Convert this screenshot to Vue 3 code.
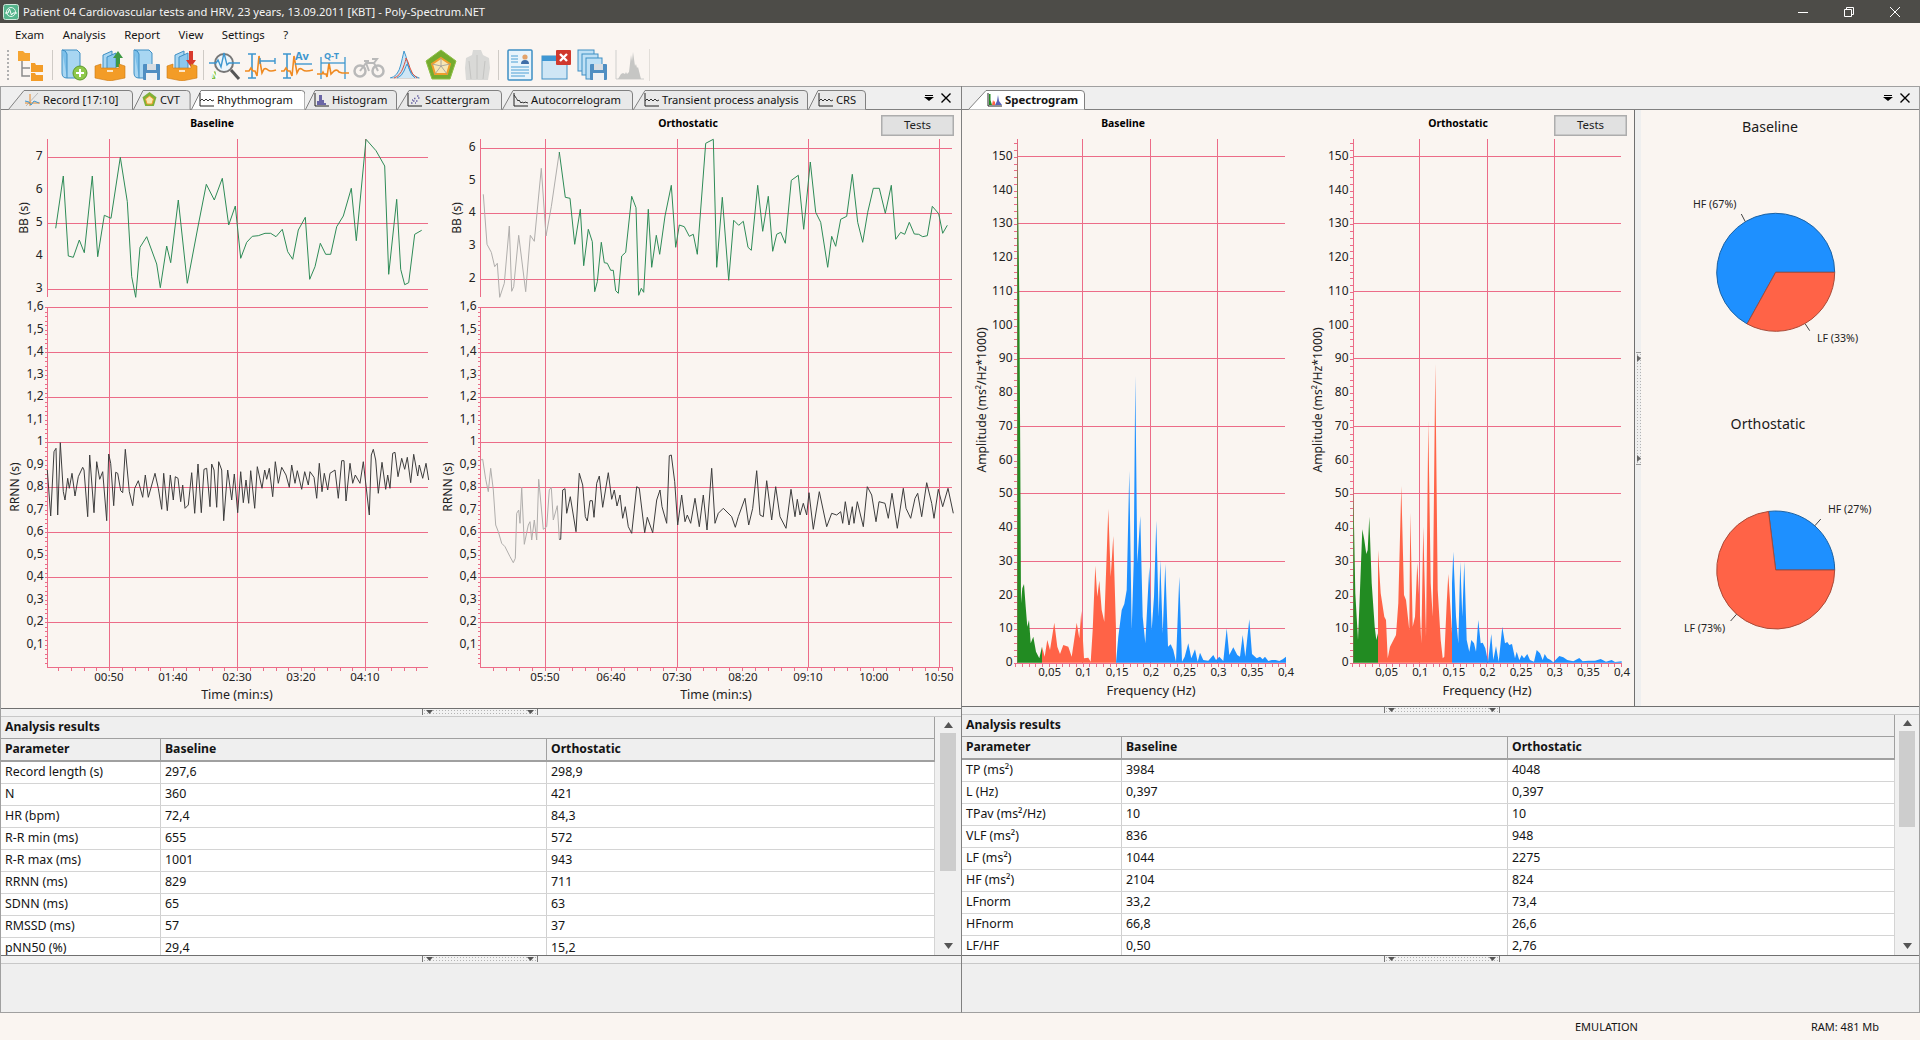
<script setup>
const Y0 = 110
const pairs = (arr, ox, oy, k = 3) => {
  const out = []
  for (let i = 0; i < arr.length; i += 2) out.push(`${(ox + arr[i] / k).toFixed(1)},${(oy + arr[i + 1] / k).toFixed(1)}`)
  return out.join(' ')
}
const closed = (arr, ox, oy, base) => {
  const a = [arr[0], base, ...arr, arr[arr.length - 2], base]
  return pairs(a, ox, oy)
}

// ---------- traces, read from the reference ----------
const bbA = [167,355,190,198,205,438,220,442,238,390,253,428,277,198,293,440,313,316,333,325,361,142,382,275,395,500,407,562,420,412,440,380,470,462,481,533,500,408,512,458,535,270,562,520,595,345,619,223,643,270,667,205,686,345,706,288,722,445,740,397,757,379,775,377,795,370,812,370,828,380,847,358,863,425,878,448,895,360,916,322,929,508,945,470,961,400,977,433,992,433,1010,350,1030,318,1054,235,1069,392,1098,88,1128,122,1154,168,1166,493,1190,268,1202,478,1214,524,1226,518,1244,373,1265,361]
const bbBg = [100,253,111,403,124,427,134,470,142,460,149,562,163,520,178,348,185,544,191,530,206,376,227,545,241,376,253,394,274,175,288,378,304,290,328,126]
const bbB = [328,126,346,262,360,265,374,403,391,298,401,467,415,358,427,395,434,545,442,515,454,397,463,458,472,460,482,481,490,481,497,542,505,550,515,438,527,427,545,259,558,293,566,556,574,535,581,547,595,298,605,472,619,376,629,433,645,318,664,226,677,412,688,345,703,350,718,379,730,373,742,433,767,100,790,88,800,472,817,262,836,511,851,331,866,346,880,334,894,412,904,421,923,226,938,364,955,259,968,424,980,373,992,367,1006,400,1024,211,1045,196,1061,358,1081,156,1097,307,1112,337,1133,472,1145,379,1157,409,1172,328,1190,319,1207,193,1223,337,1238,397,1253,307,1270,235,1288,235,1306,310,1324,226,1337,388,1352,367,1364,373,1378,337,1393,372,1406,373,1418,380,1432,377,1447,289,1466,311,1478,370,1492,346]
const rrA = [142,150,152,288,162,95,168,85,173,285,181,68,190,215,195,240,203,175,208,205,216,160,225,228,235,170,248,142,252,150,263,290,269,105,282,278,290,125,299,178,308,155,320,302,326,102,332,130,341,257,347,157,353,160,362,212,368,218,376,88,388,215,398,257,404,205,415,182,428,232,436,165,445,232,465,160,475,205,485,268,491,160,502,272,511,165,520,240,526,170,534,175,542,245,548,195,555,265,565,255,575,158,584,280,594,132,604,278,612,148,620,145,630,260,635,132,642,150,650,262,656,125,665,150,671,302,683,150,695,240,703,162,713,278,722,155,730,248,738,180,746,250,752,152,764,265,772,140,786,205,794,150,800,178,808,145,818,230,826,125,835,190,845,142,858,165,868,202,875,135,885,190,892,152,905,208,914,155,925,195,930,155,942,172,950,235,958,130,966,215,973,160,983,210,990,160,1005,150,1015,235,1025,122,1032,122,1038,243,1050,130,1058,190,1066,165,1080,190,1090,125,1108,285,1114,105,1120,88,1127,120,1135,220,1146,127,1157,208,1163,165,1170,205,1178,100,1185,97,1194,170,1205,115,1214,148,1222,112,1232,188,1241,103,1253,168,1258,135,1268,175,1278,130,1286,180]
const rrBg = [92,150,98,148,107,208,115,245,122,175,130,240,137,345,145,365,155,400,165,410,180,440,190,458,196,445,200,310,206,300,210,340,215,232,223,403,235,345,240,335,245,390,253,330,260,390,266,208,280,358,290,350,298,240,304,232,310,330,322,287,328,388]
const rrB = [328,388,332,388,338,240,345,236,350,310,361,260,378,365,388,190,398,225,406,320,412,333,420,272,427,272,432,322,440,220,448,198,458,292,475,188,485,268,493,240,501,288,510,255,518,325,526,290,535,350,545,370,560,230,568,235,584,368,592,322,608,368,620,270,630,240,636,290,650,340,658,137,664,135,674,215,683,345,695,255,705,335,712,315,722,340,735,265,748,350,760,255,771,360,785,175,795,340,805,310,820,295,845,320,856,352,865,320,885,265,896,345,908,295,920,182,930,315,940,320,950,212,965,330,977,230,990,320,1008,355,1023,238,1035,320,1042,268,1050,315,1060,280,1070,315,1077,248,1090,358,1108,245,1130,350,1145,310,1160,315,1172,305,1178,340,1186,275,1197,345,1207,290,1212,340,1222,275,1240,350,1252,230,1265,255,1278,335,1287,275,1305,280,1315,325,1326,250,1342,355,1360,235,1368,295,1382,325,1395,265,1403,250,1415,320,1430,218,1445,280,1452,325,1465,238,1478,290,1494,235,1510,310]

const sA = {
  g: [172,-870,178,-400,181,90,183,520,187,475,192,462,197,530,202,590,207,570,212,640,220,620,228,665,238,685,246,650],
  r: [246,650,254,680,262,630,270,660,283,578,292,650,300,672,310,645,325,650,335,680,350,578,358,625,364,543,372,685,385,683,392,695,398,600,406,407,412,500,418,452,425,540,433,575,445,237,452,440,460,318,468,600],
  b: [468,698,475,620,485,540,493,522,500,480,508,123,515,600,521,400,526,-162,532,400,541,258,548,560,556,640,568,410,575,600,582,500,589,272,596,560,601,390,608,610,616,402,624,650,632,643,640,660,648,695,658,440,666,695,674,680,685,640,694,685,705,658,713,695,720,668,730,690,745,692,760,675,768,690,778,680,790,693,800,595,808,675,820,652,832,675,840,680,848,615,856,680,868,568,876,672,890,685,900,680,908,688,915,680,925,693,935,690,947,690,958,693,968,688,978,680]
}
const sB = {
  g: [190,410,196,730,204,870,210,720,217,538,223,570,229,612,233,600,238,500,245,700,254,830,259,870,264,850],
  r: [264,600,272,730,283,800,288,810,293,925,300,890,318,855,325,760,334,408,342,735,348,750,358,840,361,488,368,830,375,800,382,638,388,750,394,880,400,530,408,860,415,212,422,700,428,800,436,42,443,720,452,870,458,925,463,920,470,760,475,672,486,850],
  b: [486,700,490,605,498,800,505,880,511,635,517,800,523,635,530,870,538,905,544,870,552,880,558,905,565,810,572,880,578,878,586,895,594,935,604,852,610,930,618,888,626,935,637,830,645,880,652,876,658,885,666,882,675,925,680,905,688,930,695,915,702,925,712,912,720,930,732,935,740,900,750,910,758,930,764,912,772,925,782,930,790,937,808,918,820,922,832,930,850,934,868,924,878,934,895,932,915,932,932,927,948,935,965,930,975,936,995,934]
}

// ---------- chart models ----------
const rhythm = (o) => {
  let grid = ''
  let ticks = ''
  const labels = []
  const ax = o.ax
  ticks += `M${ax} 139V297M${ax} 307V667H${o.right}`
  o.bb.forEach(([y, t], i) => {
    if (t) labels.push({ x: ax - 5, y: y - 2, t, a: 'end' })
    if (i % 2 === 0) grid += `M${ax} ${y}H${o.right}`
  })
  for (let v = 1; v <= 16; v++) {
    const y = 667 - v * 22.5
    const s = v === 10 ? '1' : `${Math.floor(v / 10)},${v % 10}`
    labels.push({ x: ax - 4, y: y - 1.2, t: s, a: 'end' })
    if (v % 2 === 0) grid += `M${ax} ${Math.round(y) + 0.5}H${o.right}`
  }
  for (let y = 307; y < 667; y += 4.5) ticks += `M${ax - 3} ${Math.round(y) + 0.5}H${ax}`
  o.vgrid.forEach((x) => { grid += `M${x} 139V667` })
  for (let x = o.tick0; x <= o.right; x += o.step) ticks += `M${Math.round(x) + 0.5} 667V671`
  o.xl.forEach(([x, t]) => labels.push({ x, y: 676, t, a: 'middle', tick: true }))
  labels.push({ x: o.tx, y: 694.5, t: 'Time (min:s)', a: 'middle', big: true })
  labels.push({ x: o.ylx1, y: 218, t: 'BB (s)', a: 'middle', rot: true })
  labels.push({ x: o.ylx2, y: 487, t: 'RRNN (s)', a: 'middle', rot: true })
  return {
    key: o.title, x: o.x, w: o.w, title: o.title, titleX: o.titleX, grid, ticks, labels, fills: [],
    lines: o.lines
  }
}
const spectro = (o) => {
  let grid = ''
  let ticks = `M${o.ax} 139V663.5H${o.right}`
  const labels = []
  for (let v = 0; v <= 150; v += 10) {
    const y = 663 - v * 3.375
    labels.push({ x: o.ax - 5, y: y - 1.5, t: String(v), a: 'end' })
    if (v % 20 === 10) grid += `M${o.ax} ${Math.round(y) - 0.5}H${o.right}`
  }
  for (let y = 663; y > 140; y -= 6.75) ticks += `M${o.ax - 4} ${Math.round(y) + 0.5}H${o.ax}`
  o.vgrid.forEach((x) => { grid += `M${x} 139V663` })
  for (let x = o.x0; x <= o.right; x += o.span / 40) ticks += `M${Math.round(x) + 0.5} 663V667`
  const tl = ['0,05', '0,1', '0,15', '0,2', '0,25', '0,3', '0,35', '0,4']
  tl.forEach((t, i) => labels.push({ x: o.x0 + 1 + (i + 1) * o.span / 8, y: 671, t, a: 'middle', tick: true }))
  labels.push({ x: o.tx, y: 689.5, t: 'Frequency (Hz)', a: 'middle', huge: true })
  labels.push({ x: o.ylx, y: 400, t: 'Amplitude (ms²/Hz*1000)', a: 'middle', rot: true, amp: true })
  return {
    key: o.title, x: o.x, w: o.w, title: o.title, titleX: o.titleX, grid, ticks, labels, lines: [],
    fills: [
      { c: '#228b22', p: closed(o.data.g, o.ox, o.oy, o.base) },
      { c: '#ff6347', p: closed(o.data.r, o.ox, o.oy, o.base) },
      { c: '#1e90ff', p: closed(o.data.b, o.ox, o.oy, o.base) }
    ]
  }
}
const leftCharts = [
  rhythm({
    title: 'Baseline', titleX: 212, x: 1, w: 439, ax: 47.5, right: 428, vgrid: [109.5, 237.5, 365.5],
    bb: [[157.5, '7'], [190, '6'], [223.5, '5'], [256, '4'], [289.5, '3']],
    tick0: 58, step: 12.8, tx: 237, ylx1: 23, ylx2: 14,
    xl: [[109, '00:50'], [173, '01:40'], [237, '02:30'], [301, '03:20'], [365, '04:10']],
    lines: [
      { c: '#2e8b57', p: pairs(bbA, 0, 110) },
      { c: '#3d3d3d', p: pairs(rrA, 0, 420) }
    ]
  }),
  rhythm({
    title: 'Orthostatic', titleX: 688, x: 440, w: 520, ax: 480.5, right: 952, vgrid: [545.5, 677.5, 808.5, 939.5],
    bb: [[148.5, '6'], [181, '5'], [213.5, '4'], [246.5, '3'], [279.5, '2']],
    tick0: 493, step: 13.1, tx: 716, ylx1: 456, ylx2: 447,
    xl: [[545, '05:50'], [611, '06:40'], [677, '07:30'], [743, '08:20'], [808, '09:10'], [874, '10:00'], [939, '10:50']],
    lines: [
      { c: '#b0aeac', p: pairs(bbBg, 450, 110) },
      { c: '#2e8b57', p: pairs(bbB, 450, 110) },
      { c: '#b0aeac', p: pairs(rrBg, 450, 410) },
      { c: '#3d3d3d', p: pairs(rrB, 450, 410) }
    ]
  })
]
const rightCharts = [
  spectro({
    title: 'Baseline', titleX: 1123, x: 962, w: 336, ax: 1017.5, right: 1285, x0: 1015, span: 270,
    vgrid: [1082.5, 1150.5, 1217.5], tx: 1151, ylx: 981, data: sA, ox: 960, oy: 430, base: 698
  }),
  spectro({
    title: 'Orthostatic', titleX: 1458, x: 1298, w: 336, ax: 1353.5, right: 1621, x0: 1352, span: 269,
    vgrid: [1419.5, 1487.5, 1554.5], tx: 1487, ylx: 1317, data: sB, ox: 1290, oy: 350, base: 938
  })
]

const pieSlice = (cx, cy, r, a0, a1) => {
  const p = (a) => `${(cx + r * Math.cos(a * Math.PI / 180)).toFixed(2)} ${(cy + r * Math.sin(a * Math.PI / 180)).toFixed(2)}`
  return `M${cx} ${cy}L${p(a0)}A${r} ${r} 0 ${a1 - a0 > 180 ? 1 : 0} 1 ${p(a1)}Z`
}
const pies = [
  { key: 'a', title: 'Baseline', tx: 1770, ty: 126, red: pieSlice(1775.7, 272.3, 59, 0, 119), blue: pieSlice(1775.7, 272.3, 59, 119, 360),
    lines: 'M1741.3 214L1745.3 221.7M1805.3 324L1809.7 330.7',
    labels: [{ x: 1693, y: 204, t: 'HF (67%)' }, { x: 1817, y: 338, t: 'LF (33%)' }] },
  { key: 'b', title: 'Orthostatic', tx: 1768, ty: 423, red: pieSlice(1775.7, 570, 59, 0, 263), blue: pieSlice(1775.7, 570, 59, 263, 360),
    lines: 'M1814.8 525.8L1820.8 519M1736.6 614.2L1730.6 621',
    labels: [{ x: 1828, y: 509, t: 'HF (27%)' }, { x: 1684, y: 628, t: 'LF (73%)' }] }
]

// ---------- chrome ----------
const menus = ['Exam', 'Analysis', 'Report', 'View', 'Settings', '?']
const leftTabs = [
  { t: 'Record [17:10]', w: 125, pad: 11, s: 16, i: 'rec' },
  { t: 'CVT', w: 57.6, pad: 9, s: 10, i: 'cvt' },
  { t: 'Rhythmogram', w: 114.4, pad: 8.5, s: 10, i: 'line', on: true },
  { t: 'Histogram', w: 92, pad: 9, s: 10, i: 'hist' },
  { t: 'Scattergram', w: 105, pad: 8, s: 12, i: 'scat' },
  { t: 'Autocorrelogram', w: 131, pad: 10, s: 11, i: 'auto' },
  { t: 'Transient process analysis', w: 175, pad: 9, s: 12, i: 'line' },
  { t: 'CRS', w: 58, pad: 10, s: 10, i: 'line' }
]
const rightTabs = [{ t: 'Spectrogram', w: 117, pad: 11, s: 18, i: 'spec', on: true, bold: true }]
const tabPath = (t) => `M0.5 19.5L${t.s} 0.5H${t.w - 4}Q${t.w - 0.5} 0.5 ${t.w - 0.5} 4V19.5`

const leftRows = [
  ['Record length (s)', '297,6', '298,9'], ['N', '360', '421'], ['HR (bpm)', '72,4', '84,3'],
  ['R-R min (ms)', '655', '572'], ['R-R max (ms)', '1001', '943'], ['RRNN (ms)', '829', '711'],
  ['SDNN (ms)', '65', '63'], ['RMSSD (ms)', '57', '37'], ['pNN50 (%)', '29,4', '15,2']
]
const rightRows = [
  ['TP (ms²)', '3984', '4048'], ['L (Hz)', '0,397', '0,397'], ['TPav (ms²/Hz)', '10', '10'],
  ['VLF (ms²)', '836', '948'], ['LF (ms²)', '1044', '2275'], ['HF (ms²)', '2104', '824'],
  ['LFnorm', '33,2', '73,4'], ['HFnorm', '66,8', '26,6'], ['LF/HF', '0,50', '2,76']
]
const panels = [
  { key: 'l', cls: 'left', tabs: leftTabs, charts: leftCharts, rows: leftRows, plotH: 598, pies: false, thumb: 138 },
  { key: 'r', cls: 'right', tabs: rightTabs, charts: rightCharts, rows: rightRows, plotH: 596, pies: true, thumb: 96 }
]
</script>

<template>
  <div class="window">
    <header class="titlebar">
      <svg class="appicon" width="16" height="16" viewBox="0 0 16 16">
        <rect x="0.5" y="0.5" width="15" height="15" rx="2" fill="#55b48c" stroke="#cfe9dc" />
        <circle cx="8" cy="8" r="4.5" fill="none" stroke="#e8f6ef" />
        <path d="M2 9h3l1.5-4 2 6 1.5-2h4" fill="none" stroke="#fff" />
      </svg>
      <span class="wintitle">Patient 04 Cardiovascular tests and HRV, 23 years, 13.09.2011 [KBT] - Poly-Spectrum.NET</span>
      <div class="winbtns">
        <span class="winbtn"><svg width="12" height="12" viewBox="0 0 12 12"><path d="M1 6.5h10" stroke="#fff" /></svg></span>
        <span class="winbtn"><svg width="12" height="12" viewBox="0 0 12 12"><path d="M1.5 3.5h7v7h-7zM3.5 3.5v-2h7v7h-2" fill="none" stroke="#fff" /></svg></span>
        <span class="winbtn"><svg width="12" height="12" viewBox="0 0 12 12"><path d="M1 1l10 10M11 1L1 11" stroke="#fff" /></svg></span>
      </div>
    </header>

    <nav class="menubar">
      <span v-for="m in menus" :key="m" class="menu">{{ m }}</span>
    </nav>

    <div class="toolbar">
      <span class="grip"></span>
      <svg class="tb" viewBox="0 0 32 32">
        <path d="M7 10V27H15M7 19H15" fill="none" stroke="#8a8a8a" stroke-width="1.5" />
        <path d="M3 2h5l2 2h5v8H3z" fill="#f6a531" />
        <path d="M16 14h4l1 2h7v7H16z" fill="#f39c27" />
        <path d="M16 24h4l1 2h7v6H16z" fill="#f39c27" />
      </svg>
      <span class="sep"></span>
      <svg class="tb" viewBox="0 0 32 32">
        <path d="M4 1h15l3 3v25H9q-5 0-5-5z" fill="#a8d6f2" stroke="#3e8fc4" />
        <path d="M4 1q4 0 5 4v24" fill="#7cc0ea" stroke="#3e8fc4" />
        <circle cx="22" cy="24" r="7" fill="#8fc84a" stroke="#5d9a2a" />
        <path d="M22 20v8M18 24h8" stroke="#fff" stroke-width="2" />
      </svg>
      <svg class="tb" viewBox="0 0 32 32">
        <path d="M9 6l9-4v20H9z" fill="#a8d6f2" stroke="#3e8fc4" />
        <path d="M13 8l9-4v18h-9z" fill="#8cc8ee" stroke="#3e8fc4" />
        <path d="M22 18V9h-3l5-7 5 7h-3v9z" fill="#3f9a44" />
        <path d="M1 17l6-2v4h18v-4l6 2v12l-15 3L1 29z" fill="#f39c27" stroke="#c97a16" stroke-width=".6" />
        <path d="M13 22h6" stroke="#fff" stroke-width="1.5" />
      </svg>
      <svg class="tb" viewBox="0 0 32 32">
        <path d="M4 1h15l3 3v25H9q-5 0-5-5z" fill="#a8d6f2" stroke="#3e8fc4" />
        <path d="M4 1q4 0 5 4v24" fill="#7cc0ea" stroke="#3e8fc4" />
        <rect x="13" y="15" width="17" height="16" rx="1" fill="#4f8ec2" />
        <rect x="17" y="15" width="9" height="6" fill="#d8dde2" />
        <rect x="16" y="24" width="11" height="7" fill="#eef1f4" />
      </svg>
      <svg class="tb" viewBox="0 0 32 32">
        <path d="M9 6l9-4v20H9z" fill="#a8d6f2" stroke="#3e8fc4" />
        <path d="M13 8l9-4v18h-9z" fill="#8cc8ee" stroke="#3e8fc4" />
        <path d="M23 2v9h-3l5 7 5-7h-3V2z" fill="#d83a2e" />
        <path d="M1 17l6-2v4h18v-4l6 2v12l-15 3L1 29z" fill="#f39c27" stroke="#c97a16" stroke-width=".6" />
        <path d="M13 22h6" stroke="#fff" stroke-width="1.5" />
      </svg>
      <span class="sep"></span>
      <svg class="tb" viewBox="0 0 32 32">
        <circle cx="15" cy="14" r="9" fill="#eef6fb" stroke="#777" stroke-width="2" />
        <path d="M22 21l8 9" stroke="#555" stroke-width="3" />
        <path d="M0 14h7l2-3 3 7 3-14 3 12 2-2h11" fill="none" stroke="#3e97cf" stroke-width="1.4" />
        <path d="M6 22q-4 2-3 8h3q3-4 0-8z" fill="#7cc24a" />
        <text x="2.5" y="29" class="tbtext">N</text>
      </svg>
      <svg class="tb" viewBox="0 0 32 32">
        <path d="M3 5h8M3 29h8M7 5v24" stroke="#3e97cf" stroke-width="1.6" fill="none" />
        <path d="M0 22h4l2-3 2 3h2l2 5 2-20 3 17 2-4q2-1 4 1t8 0" fill="none" stroke="#ef8a21" stroke-width="1.6" />
        <path d="M15 12h15M15 9v6M30 9v6" stroke="#3e97cf" stroke-width="1.4" fill="none" />
      </svg>
      <svg class="tb" viewBox="0 0 32 32">
        <path d="M2 5h8M2 29h8M6 5v24" stroke="#3e97cf" stroke-width="1.6" fill="none" />
        <path d="M0 22h3l2-3 2 3h2l2 5 2-20 3 17 2-4q2-1 4 1t10 0" fill="none" stroke="#ef8a21" stroke-width="1.6" />
        <text x="14" y="11" class="tbtext blue">Av</text>
        <path d="M14 15h17" stroke="#3e97cf" stroke-width="1.4" />
      </svg>
      <svg class="tb" viewBox="0 0 32 32">
        <path d="M4 8v22M28 8v22" stroke="#3e97cf" stroke-width="1.3" />
        <path d="M0 25h5l1-2 1 2h2l1 3 2-14 2 11 3-3q3-2 5 1l3 1h7" fill="none" stroke="#ef8a21" stroke-width="1.6" />
        <text x="7" y="10" class="tbtext blue small">Q-T</text>
        <path d="M4 14h24" stroke="#3e97cf" stroke-width="1.3" />
      </svg>
      <svg class="tb" viewBox="0 0 32 32">
        <circle cx="7" cy="22" r="5.5" fill="none" stroke="#b9b9b9" stroke-width="2.5" />
        <circle cx="25" cy="22" r="5.5" fill="none" stroke="#b9b9b9" stroke-width="2.5" />
        <path d="M7 22l6-8h8l4 8M13 14l3 8M19 10h5l-3 4M11 12h5" fill="none" stroke="#b9b9b9" stroke-width="2" />
      </svg>
      <svg class="tb" viewBox="0 0 32 32">
        <path d="M2 29h29" stroke="#b8b8b8" />
        <path d="M1 29q8-1 11-14t3-13q2 4 4 14t11 13" fill="#cfe6f5" stroke="#3e97cf" />
        <path d="M5 29q6-2 9-10t3-10q2 3 4 10t7 10" fill="none" stroke="#d8503e" />
        <path d="M8 29q5-2 7-7t3-7q2 3 3 7t5 7" fill="none" stroke="#3e97cf" />
      </svg>
      <svg class="tb" viewBox="0 0 32 32">
        <path d="M16 1l15 11-6 18H7L1 12z" fill="#74ab2e" stroke="#8ebf48" />
        <path d="M16 9l9 6-3 10H10L7 15z" fill="#f6e7b6" stroke="#ef9e2b" stroke-width="2" />
        <path d="M16 17l9-2M16 17l6 8M16 17l-6 8M16 17l-9-2M16 17V9" stroke="#999" stroke-width=".8" />
      </svg>
      <svg class="tb" viewBox="0 0 32 32">
        <path d="M12 1h8l2 5 6 3 1 10-2 12H5L4 19 5 9l6-3z" fill="#d9d9d7" />
        <path d="M16 6v24M8 12l2 18M24 12l-2 18" stroke="#c4c4c2" />
      </svg>
      <span class="sep"></span>
      <svg class="tb" viewBox="0 0 32 32">
        <rect x="4" y="1" width="24" height="30" rx="1" fill="#e8f4fb" stroke="#3e8fc4" stroke-width="1.5" />
        <circle cx="21" cy="8" r="2.6" fill="#e3a36a" />
        <path d="M17 15q0-4 4-4t4 4z" fill="#3e6ea8" />
        <path d="M7 7h7M7 10h7M7 13h7M7 18h18M7 21h18M7 24h18M7 27h14" stroke="#4d9fd6" stroke-width="1.2" />
      </svg>
      <svg class="tb" viewBox="0 0 32 32">
        <rect x="2" y="7" width="25" height="23" fill="#cfe6f5" stroke="#3e8fc4" />
        <rect x="2" y="7" width="25" height="5" fill="#3f97d3" />
        <rect x="16" y="1" width="15" height="15" rx="1" fill="#d0392d" />
        <path d="M20 5l7 7M27 5l-7 7" stroke="#fff" stroke-width="2.4" />
      </svg>
      <svg class="tb" viewBox="0 0 32 32">
        <rect x="2" y="1" width="16" height="21" fill="#bfe0f5" stroke="#3e8fc4" />
        <rect x="6" y="5" width="16" height="21" fill="#bfe0f5" stroke="#3e8fc4" />
        <rect x="10" y="9" width="16" height="21" fill="#bfe0f5" stroke="#3e8fc4" />
        <rect x="14" y="15" width="17" height="16" rx="1" fill="#4f8ec2" />
        <rect x="18" y="15" width="9" height="6" fill="#d8dde2" />
        <rect x="17" y="24" width="11" height="7" fill="#eef1f4" />
      </svg>
      <svg class="tb" viewBox="0 0 32 32">
        <path d="M4 1v29h28" fill="none" stroke="#cfcfcd" />
        <path d="M6 30l3-5 2-1 2 1 1-2 1 2 2-2 2-17 1 6 1-9 2 14 1-2 1 4 1-1 3 12z" fill="#c6c6c4" />
      </svg>
      <span class="tbend"></span>
    </div>

    <main class="workspace">
      <section v-for="p in panels" :key="p.key" class="panel" :class="p.cls">
        <div class="tabstrip">
          <div v-for="t in p.tabs" :key="t.t" class="tab" :class="{ on: t.on, bold: t.bold }" :style="{ width: t.w + 'px' }">
            <svg class="tabshape" :width="t.w" height="20">
              <path :d="tabPath(t)" />
            </svg>
            <div class="tabbody" :style="{ paddingLeft: (t.s + t.pad - 10) + 'px' }">
              <svg class="tabicon" width="15" height="15" viewBox="0 0 15 15">
                <template v-if="t.i === 'rec'">
                  <path d="M1 14L13 1" stroke="#b9b9b9" fill="none" />
                  <path d="M5 2v12M0 11h15" stroke="#e88a2a" fill="none" />
                  <path d="M0 9l4 1 2 3 3-4 5 2" stroke="#3e97cf" fill="none" />
                </template>
                <template v-else-if="t.i === 'cvt'">
                  <path d="M7.5 0l7 5.3-2.7 8.7H3.2L.5 5.3z" fill="#7fb037" />
                  <path d="M7.5 4l4 3-1.5 5H5L3.5 7z" fill="#f9e6b0" stroke="#ef9e2b" />
                </template>
                <template v-else-if="t.i === 'hist'">
                  <path d="M1 14h14M1 1v13" stroke="#222" fill="none" />
                  <path d="M3 13V9h2V3h3v5h2v3h2v2z" fill="#6a66a6" />
                </template>
                <template v-else-if="t.i === 'scat'">
                  <path d="M1 1v13h14" stroke="#222" fill="none" />
                  <path d="M4 11h1.5M6 9h1.5M9 9h1.5M7 6.5h1.5M11 6h1.5M10 4h1.5M5 8h1M8 11h1" stroke="#6a66a6" stroke-width="1.5" />
                </template>
                <template v-else-if="t.i === 'auto'">
                  <path d="M1 1v13h14" stroke="#222" fill="none" />
                  <path d="M1 3q3 4 4 6l1-1 2 3 1-1 2 1 1-1 3 1" stroke="#333" fill="none" />
                </template>
                <template v-else-if="t.i === 'spec'">
                  <path d="M1 1v13h14" stroke="#222" fill="none" />
                  <path d="M2 13V2h1.5v6L5 13z" fill="#228b22" />
                  <path d="M5 13l1-5 1 2 1-1v4z" fill="#ff6347" />
                  <path d="M8 13l2-4 1-6 1 6 3 4z" fill="#5a62b8" />
                </template>
                <template v-else>
                  <path d="M1 1v13h14" stroke="#222" fill="none" />
                  <path d="M1 9l2-2 2 2 2-2 2 2 2-2 2 2 2-1" stroke="#333" fill="none" />
                </template>
              </svg>
              <span class="tabtext">{{ t.t }}</span>
            </div>
          </div>
          <div class="tabctl">
            <svg width="10" height="6" viewBox="0 0 10 6"><path d="M1 .5h8" stroke="#000" /><path d="M0 2h10L5 6z" fill="#000" /></svg>
            <svg width="10" height="10" viewBox="0 0 10 10"><path d="M.5.5l9 9M9.5.5l-9 9" stroke="#000" stroke-width="1.4" /></svg>
          </div>
        </div>

        <div class="plots" :style="{ height: p.plotH + 'px' }">
          <svg v-for="c in p.charts" :key="c.key" class="plot" :width="c.w" :height="p.plotH" :viewBox="`${c.x} ${Y0} ${c.w} ${p.plotH}`">
            <text class="bold" :x="c.titleX" y="122.5" text-anchor="middle" dominant-baseline="central">{{ c.title }}</text>
            <path class="grid" :d="c.grid" />
            <path class="axis" :d="c.ticks" />
            <polygon v-for="f in c.fills" :key="f.c" :points="f.p" :fill="f.c" />
            <polyline v-for="l in c.lines" :key="l.p.slice(0, 20)" :points="l.p" :stroke="l.c" class="trace" />
            <text
              v-for="(l, i) in c.labels" :key="i" class="lab" :class="{ big: l.big, huge: l.huge, amp: l.amp, tick: l.tick }" :x="l.x" :y="l.y" :text-anchor="l.a"
              dominant-baseline="central" :transform="l.rot ? `rotate(-90 ${l.x} ${l.y})` : null"
            >{{ l.t }}</text>
          </svg>
          <button class="tests" :class="p.cls">Tests</button>
          <template v-if="p.pies">
            <div class="vsplit">
              <span class="vgrip">
                <svg width="4" height="7" viewBox="0 0 4 7"><path d="M0 0l4 3.5L0 7z" fill="#666" /></svg>
                <svg width="4" height="7" viewBox="0 0 4 7"><path d="M0 0l4 3.5L0 7z" fill="#666" /></svg>
              </span>
            </div>
            <svg class="plot" width="278" :height="p.plotH" :viewBox="`1641 ${Y0} 278 ${p.plotH}`">
              <g v-for="q in pies" :key="q.key">
                <text class="pietitle" :x="q.tx" :y="q.ty" text-anchor="middle" dominant-baseline="central">{{ q.title }}</text>
                <path :d="q.blue" fill="#1e90ff" stroke="#1c62a3" />
                <path :d="q.red" fill="#ff6347" stroke="#a94a38" />
                <path :d="q.lines" stroke="#444" fill="none" />
                <text v-for="l in q.labels" :key="l.t" class="pielab" :x="l.x" :y="l.y" dominant-baseline="central">{{ l.t }}</text>
              </g>
            </svg>
          </template>
        </div>

        <div class="hsplit">
          <span class="hgrip">
            <svg width="7" height="4" viewBox="0 0 7 4"><path d="M0 0h7L3.5 4z" fill="#555" /></svg>
            <svg width="7" height="4" viewBox="0 0 7 4"><path d="M0 0h7L3.5 4z" fill="#555" /></svg>
          </span>
        </div>

        <div class="results">
          <div class="table">
            <div class="caption">Analysis results</div>
            <div class="row head"><span>Parameter</span><span>Baseline</span><span>Orthostatic</span></div>
            <div v-for="r in p.rows" :key="r[0]" class="row">
              <span v-for="(v, i) in r" :key="i">{{ v }}</span>
            </div>
          </div>
          <div class="scroll">
            <svg width="9" height="6" viewBox="0 0 9 6" class="sarrow"><path d="M4.5 0L9 6H0z" fill="#555" /></svg>
            <div class="strack"><div class="sthumb" :style="{ height: p.thumb + 'px' }"></div></div>
            <svg width="9" height="6" viewBox="0 0 9 6" class="sarrow"><path d="M4.5 6L9 0H0z" fill="#555" /></svg>
          </div>
        </div>

        <div class="hsplit low">
          <span class="hgrip">
            <svg width="7" height="4" viewBox="0 0 7 4"><path d="M0 0h7L3.5 4z" fill="#555" /></svg>
            <svg width="7" height="4" viewBox="0 0 7 4"><path d="M0 0h7L3.5 4z" fill="#555" /></svg>
          </span>
        </div>
        <div class="lower"></div>
      </section>
    </main>

    <footer class="statusbar">
      <span class="st1">EMULATION</span>
      <span class="st2">RAM: 481 Mb</span>
    </footer>
  </div>
</template>

<style>
html, body { margin: 0; padding: 0; background: #faf5f1; }
</style>

<style scoped>
.window {
  width: 1920px;
  height: 1040px;
  display: flex;
  flex-direction: column;
  overflow: hidden;
  background: #faf5f1;
  color: #141414;
  font-family: "Noto Sans", "Open Sans", sans-serif;
  font-size: 12px;
}
.titlebar {
  height: 23px;
  flex: none;
  display: flex;
  align-items: center;
  background: #4d4c48;
  color: #f4f4f4;
  padding-left: 3px;
}
.appicon { flex: none; margin-right: 4px; }
.wintitle { font-size: 11.2px; white-space: nowrap; }
.winbtns { margin-left: auto; display: flex; padding-right: 2px; }
.winbtn { width: 46px; height: 23px; display: flex; align-items: center; justify-content: center; }

.menubar {
  height: 25px;
  flex: none;
  box-sizing: border-box;
  display: flex;
  align-items: center;
  gap: 18.5px;
  padding: 0 0 2px 15px;
  font-size: 11.3px;
}
.menu { white-space: nowrap; }

.toolbar {
  height: 38px;
  flex: none;
  display: flex;
  align-items: center;
  gap: 4px;
  padding: 0 0 4px 7px;
  box-sizing: border-box;
}
.grip { width: 0; height: 30px; border-left: 2px dotted #b0b0b0; margin-right: 2px; }
.tb { width: 32px; height: 32px; flex: none; }
.tbtext { font-size: 8px; font-weight: 700; fill: #fff; }
.tbtext.blue { fill: #3e97cf; font-size: 11px; }
.tbtext.blue.small { font-size: 9px; }
.sep { width: 1px; height: 30px; background: #cfcbc6; margin: 0 1px; flex: none; }
.tbend { width: 1px; height: 32px; background: #e2ded9; margin-left: 1px; }

.workspace { height: 927px; flex: none; display: flex; }
.panel { display: flex; flex-direction: column; min-width: 0; box-sizing: border-box; border-bottom: 1px solid #a0a0a0; }
.panel.left { width: 962px; border-left: 1px solid #a0a0a0; border-right: 1px solid #808080; }
.panel.right { width: 958px; border-right: 1px solid #a0a0a0; }

.tabstrip {
  height: 24px;
  flex: none;
  box-sizing: border-box;
  display: flex;
  align-items: flex-end;
  background: #efefef;
  border-top: 1px solid #a0a0a0;
  border-bottom: 1px solid #808080;
  padding-left: 7px;
  position: relative;
  font-size: 11.2px;
}
.right .tabstrip { padding-left: 6px; }
.tab { height: 20px; flex: none; position: relative; margin-bottom: -1px; }
.tabshape { position: absolute; left: 0; top: 0; }
.tabshape path { fill: #e9e9e9; stroke: #808080; }
.tab.on .tabshape path { fill: #fff; }
.tabbody { position: relative; height: 19px; display: flex; align-items: center; gap: 3px; box-sizing: border-box; }
.tabicon { flex: none; }
.tabtext { white-space: nowrap; }
.tab.bold .tabtext { font-weight: 700; font-size: 11.4px; }
.tabctl {
  margin-left: auto;
  height: 22px;
  display: flex;
  align-items: center;
  gap: 7px;
  padding-right: 10px;
}
.right .tabctl { padding-right: 9px; }

.plots { flex: none; display: flex; position: relative; overflow: hidden; }
.plot { flex: none; display: block; }
.bold { font-weight: 700; font-size: 10.4px; fill: #000; }
.grid { stroke: #ec6c88; fill: none; stroke-width: 1; shape-rendering: crispEdges; }
.axis { stroke: #ec6c88; fill: none; stroke-width: 1; shape-rendering: crispEdges; }
.trace { fill: none; stroke-width: 1; }
.lab { font-size: 12px; fill: #222; }
.lab.tick { font-size: 11.5px; }
.lab.big { font-size: 12.5px; }
.lab.huge { font-size: 12.8px; }
.lab.amp { font-size: 12.2px; }
.pietitle { font-size: 14.2px; fill: #1a1a1a; }
.pielab { font-size: 10.6px; fill: #222; }

.tests {
  position: absolute;
  top: 5px;
  width: 73px;
  height: 21px;
  padding: 0 0 2px;
  font: inherit;
  font-size: 11.5px;
  line-height: 15px;
  color: #222;
  background: #e1e1e1;
  border: 1px solid #adadad;
  box-shadow: inset 0 0 0 0.5px #adadad;
}
.tests.left { left: 880px; }
.tests.right { left: 592px; }

.vsplit { width: 7px; flex: none; background: #efefef; border-left: 1px solid #707070; box-sizing: border-box; position: relative; }
.vgrip {
  position: absolute;
  left: 1px;
  top: 242px;
  width: 5px;
  height: 113px;
  box-sizing: border-box;
  border-top: 1px solid #999;
  border-bottom: 1px solid #999;
  background: radial-gradient(#b4b4b4 35%, transparent 45%) 0 0 / 3px 3px;
  display: flex;
  flex-direction: column;
  justify-content: space-between;
  padding: 2px 0 2px 1px;
}

.hsplit {
  height: 7px;
  flex: none;
  background: #f2f2f2;
  border-top: 1px solid #707070;
  border-bottom: 1px solid #c8c8c8;
  margin-bottom: -1px;
  position: relative;
}
.hgrip {
  position: absolute;
  left: 421px;
  top: 0;
  width: 116px;
  height: 6px;
  box-sizing: border-box;
  border-left: 1px solid #777;
  border-right: 1px solid #777;
  background: radial-gradient(#b4b4b4 35%, transparent 45%) 0 0 / 3px 3px;
  display: flex;
  justify-content: space-between;
  align-items: flex-start;
  padding: 1px 3px 0;
}
.right .hgrip { left: 422px; }

.results { height: 239px; flex: none; display: flex; overflow: hidden; font-size: 12.4px; }
.right .results { height: 241px; }
.table { width: 934px; flex: none; overflow: hidden; background: #fff; }
.right .table { width: 933px; }
.caption {
  height: 23px;
  box-sizing: border-box;
  background: #efefef;
  font-weight: 700;
  font-size: 12.2px;
  line-height: 21px;
  padding-left: 4px;
  border-bottom: 1px solid #a0a0a0;
  border-right: 1px solid #a0a0a0;
}
.row {
  display: grid;
  grid-template-columns: 160px 386px 1fr;
  height: 22px;
  box-sizing: border-box;
  border-bottom: 1px solid #d4d4d4;
  border-right: 1px solid #d4d4d4;
  line-height: 20px;
}
.row span { padding-left: 4px; border-right: 1px solid #d0d0d0; white-space: nowrap; }
.row span:last-child { border-right: 0; }
.row.head {
  height: 23px;
  background: #efefef;
  font-weight: 700;
  font-size: 12.2px;
  border-bottom: 2px solid #a0a0a0;
  border-right: 1px solid #a0a0a0;
}
.row.head span { border-right-color: #a0a0a0; }
.scroll {
  flex: 1;
  background: #f0f0f0;
  display: flex;
  flex-direction: column;
  align-items: center;
  padding: 6px 0;
  box-sizing: border-box;
  gap: 5px;
}
.strack { flex: 1; width: 100%; display: flex; justify-content: center; }
.sthumb { width: 16px; background: #cdcdcd; }
.sarrow { flex: none; }
.lower { flex: 1; background: #efefef; }

.statusbar { height: 27px; flex: none; position: relative; display: flex; align-items: center; font-size: 11px; }
.st1 { margin-left: 1575px; }
.st2 { margin-left: 173px; }
</style>
